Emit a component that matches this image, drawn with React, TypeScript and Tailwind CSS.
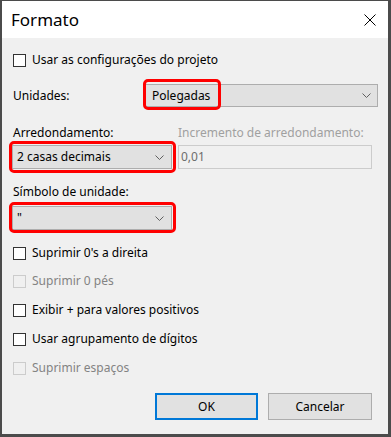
import React from "react";

const font = { fontFamily: '"Noto Sans", "Liberation Sans", sans-serif' };

function Chevron() {
  return (
    <svg width="9" height="5" viewBox="0 0 9 5" className="shrink-0">
      <polyline points="0.5,0.5 4.5,4.5 8.5,0.5" fill="none" stroke="#606060" strokeWidth="1" />
    </svg>
  );
}

function Select({ text, className }: { text: string; className: string }) {
  return (
    <div className={"flex items-center justify-between bg-[#e1e1e1] border border-[#adadad] " + className}>
      <span className="text-[12px] text-black leading-none">{text}</span>
      <Chevron />
    </div>
  );
}

function Check({ label, disabled, className }: { label: string; disabled?: boolean; className?: string }) {
  return (
    <div className={"flex items-center h-[16px] " + (className ?? "")}>
      <div
        className={
          "w-[13px] h-[13px] border " +
          (disabled ? "border-[#cccccc] bg-[#f0f0f0]" : "border-[#333333] bg-white")
        }
      />
      <span className={"ml-[6px] text-[12px] leading-none " + (disabled ? "text-[#838383]" : "text-black")}>
        {label}
      </span>
    </div>
  );
}

export default function App() {
  return (
    <div className="relative w-[391px] h-[437px] bg-[#4b4b4b] pt-px pl-[2px] pr-[3px] pb-[3px]" style={font}>
      <div className="flex flex-col h-full">
        <div className="h-[37px] shrink-0 bg-white flex items-center justify-between pl-[9px] pr-[12px]">
          <span className="text-[17px] text-black leading-none">Formato</span>
          <svg width="12" height="12" viewBox="0 0 12 12">
            <line x1="0.5" y1="0.5" x2="11.5" y2="11.5" stroke="#000" strokeWidth="1" />
            <line x1="11.5" y1="0.5" x2="0.5" y2="11.5" stroke="#000" strokeWidth="1" />
          </svg>
        </div>
        <div className="flex-1 bg-[#f0f0f0] flex flex-col pl-[11px] pr-[10px]">
          <Check label="Usar as configurações do projeto" className="mt-[14px]" />
          <div className="flex items-center h-[23px] mt-[16px]">
            <span className="w-[132px] text-[12px] leading-none text-black">Unidades:</span>
            <Select text="Polegadas" className="flex-1 h-[23px] pl-[6px] pr-[6px]" />
          </div>
          <div className="flex items-center h-[16px] mt-[18px]">
            <span className="w-[165px] text-[12px] leading-none text-black">Arredondamento:</span>
            <span className="text-[12px] leading-none text-[#a0a0a0]">Incremento de arredondamento:</span>
          </div>
          <div className="flex items-center h-[24px] mt-[4px] -ml-px">
            <Select text="2 casas decimais" className="w-[160px] h-[24px] pl-[4px] pr-[7px]" />
            <div className="ml-[6px] w-[194px] h-[24px] border border-[#cccccc] bg-[#f0f0f0] flex items-center pl-[2px]">
              <span className="text-[12px] leading-none text-[#6d6d6d]">0,01</span>
            </div>
          </div>
          <div className="flex items-center h-[16px] mt-[15px]">
            <span className="text-[12px] leading-none text-black">Símbolo de unidade:</span>
          </div>
          <div className="flex items-center h-[24px] mt-[6px] -ml-px">
            <Select text={'"'} className="w-[160px] h-[24px] pl-[4px] pr-[7px]" />
          </div>
          <Check label="Suprimir 0's a direita" className="mt-[15px]" />
          <Check label="Suprimir 0 pés" disabled className="mt-[12px]" />
          <Check label="Exibir + para valores positivos" className="mt-[13px]" />
          <Check label="Usar agrupamento de dígitos" className="mt-[13px]" />
          <Check label="Suprimir espaços" disabled className="mt-[13px]" />
          <div className="flex justify-end gap-[10px] mt-[17px] pr-[6px]">
            <div className="w-[103px] h-[27px] bg-[#e1e1e1] border-2 border-[#0078d7] flex items-center justify-center">
              <span className="text-[12px] leading-none text-black">OK</span>
            </div>
            <div className="w-[104px] h-[27px] bg-[#e1e1e1] border border-[#adadad] flex items-center justify-center">
              <span className="text-[12px] leading-none text-black">Cancelar</span>
            </div>
          </div>
        </div>
      </div>
      <div className="absolute left-[143px] top-[79px] w-[78px] h-[31px] border-[3px] border-[#ff0000] rounded-[5px] pointer-events-none" />
      <div className="absolute left-[9px] top-[141px] w-[167px] h-[32px] border-[3px] border-[#ff0000] rounded-[5px] pointer-events-none" />
      <div className="absolute left-[9px] top-[202px] w-[167px] h-[31px] border-[3px] border-[#ff0000] rounded-[5px] pointer-events-none" />
    </div>
  );
}
